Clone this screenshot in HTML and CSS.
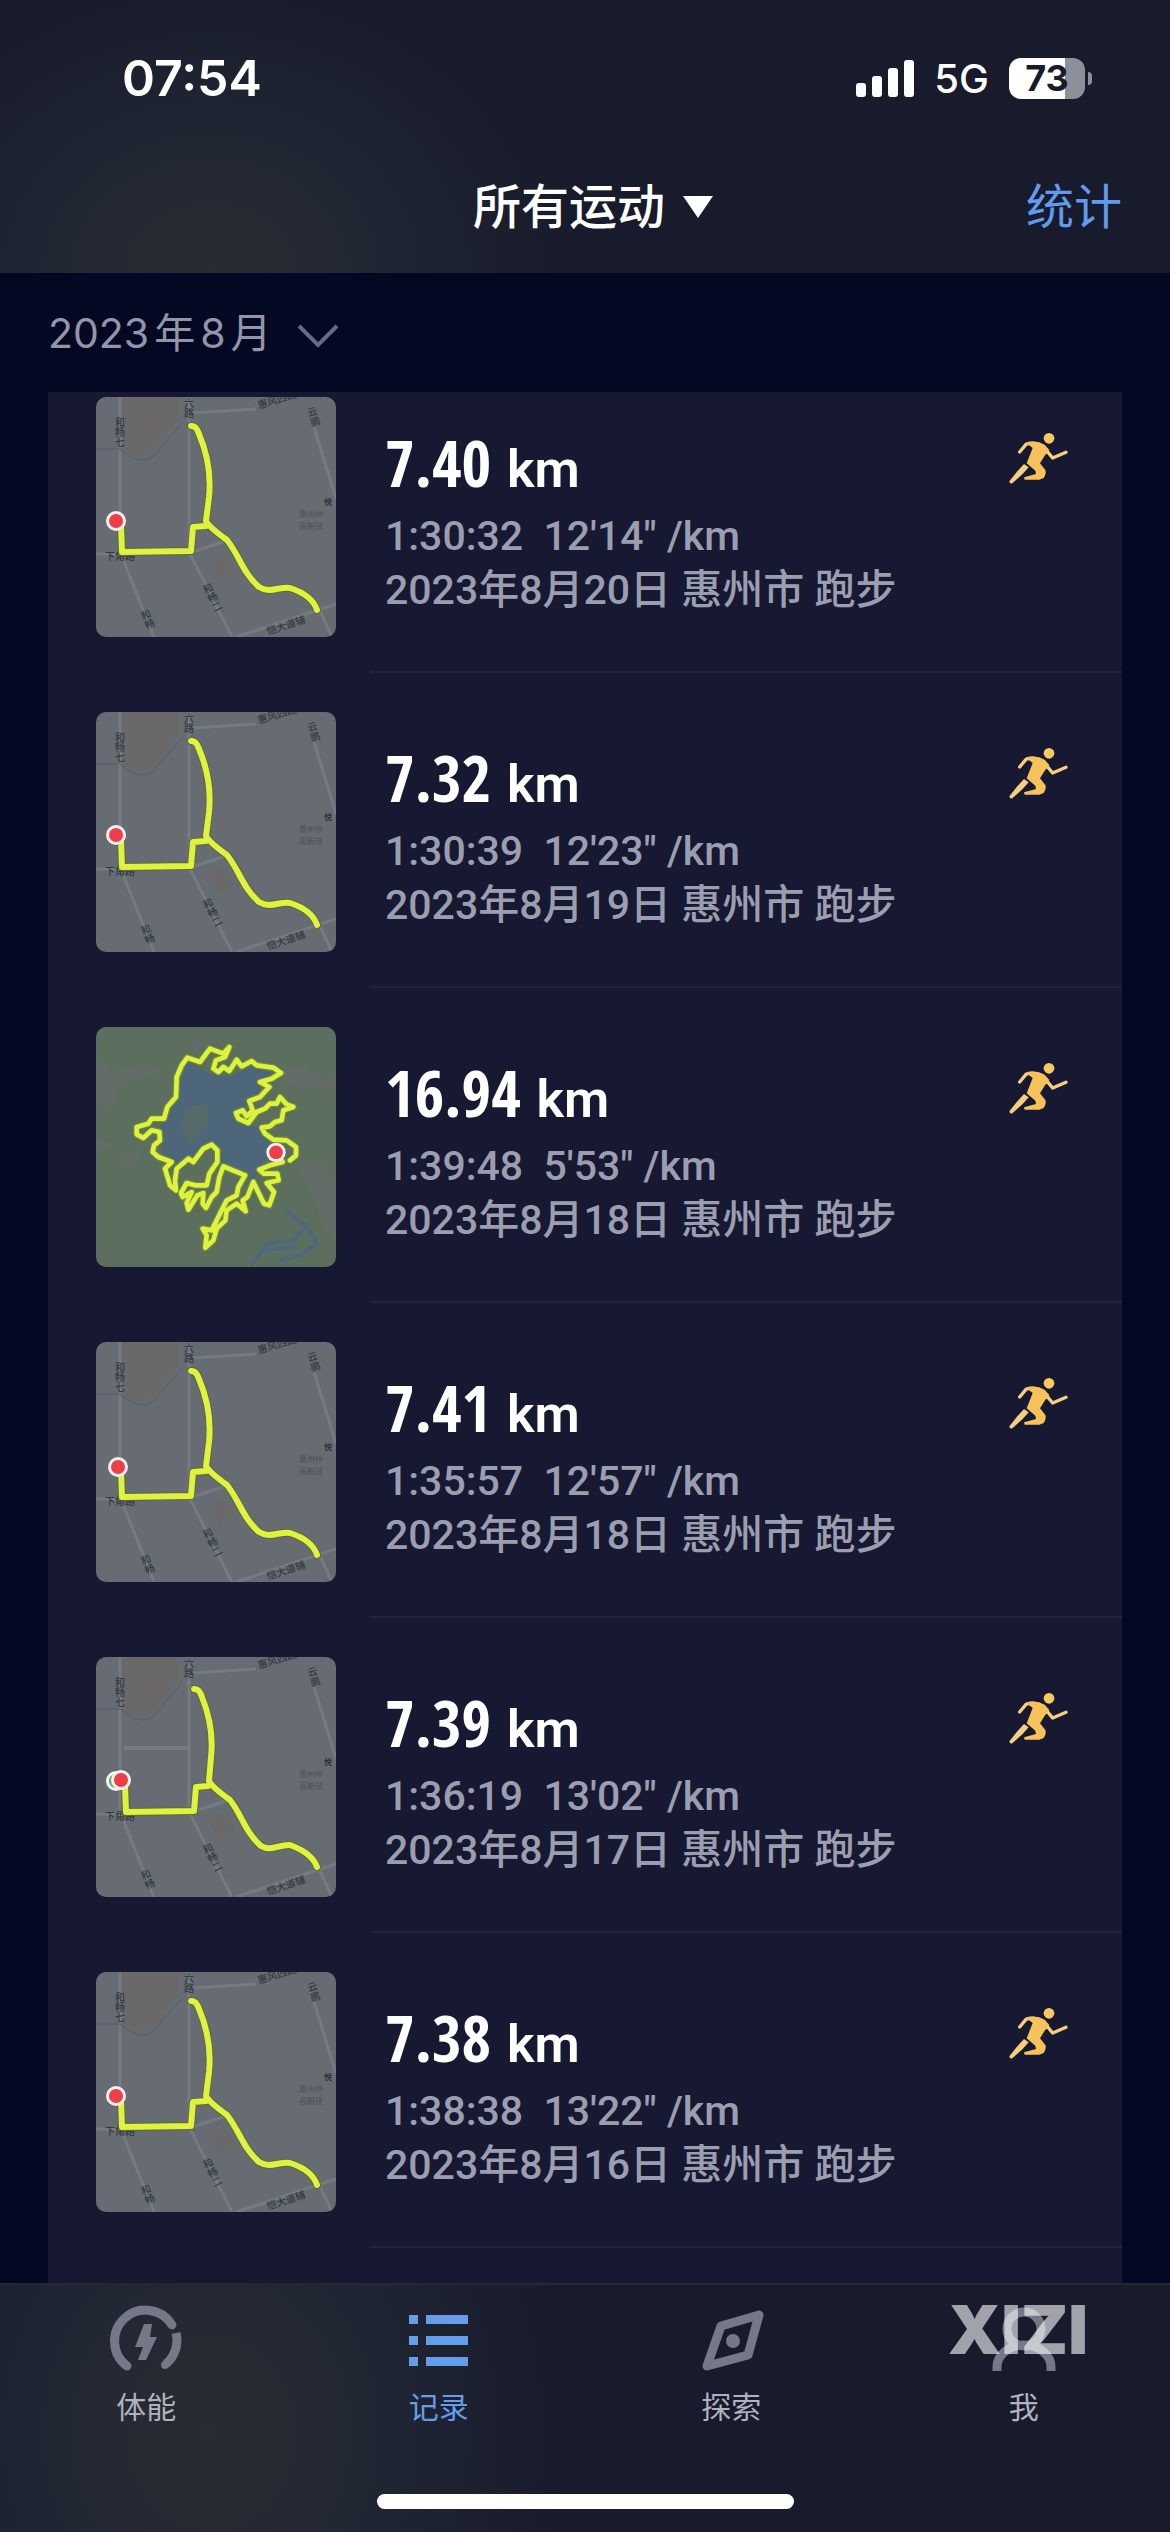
FILE: index.html
```html
<!DOCTYPE html>
<html lang="zh-CN">
<head>
<meta charset="utf-8">
<meta name="viewport" content="width=device-width, initial-scale=1">
<title>所有运动</title>
<link rel="stylesheet" href="styles.css">
</head>
<body>
<svg class="defs" aria-hidden="true">
  <symbol id="runner" viewBox="84 94 180 156">
    <circle cx="207" cy="113" r="16" fill="#f7c95e"/>
    <path fill="none" stroke="#f5cf7d" stroke-width="10" stroke-linecap="round" stroke-linejoin="round" d="M119 154 L138 131 Q152 125 172 130 M194 143 L218 172 L258 155"/>
    <path fill="#f7c25a" d="M138 126 Q168 116 194 132 L208 148 L202 158 L196 162 L180 188 L196 208 Q200 218 191 232 L178 237 L134 237 L132 230 L168 220 L166 210 L140 188 L158 142 Z"/>
    <path fill="#f5cf7d" d="M132 190 L146 200 L128 220 L97 248 Q89 251 88 242 L112 212 Z"/>
  </symbol>
  <symbol id="streets" viewBox="0 0 240 240">
    <rect width="240" height="240" fill="#666c71"/>
    <path fill="#6a6868" d="M26 0 H82 V22 L60 52 Q44 64 28 54 Z M112 165 L126 156 L140 172 L124 182 Z"/>
    <path fill="none" stroke="#747b82" stroke-width="3" d="M24 0 V155 L58 240 M93 0 V155 L136 240 M96 16 L160 12 M0 157 H24 M96 155 L130 144 M215 20 L240 102 M140 240 L240 207 M224 214 L236 240"/>
    <path fill="none" stroke="#545e68" stroke-width="1" d="M0 52 H24 Q48 72 60 56 L86 26"/>
    <g class="street-name">
      <text class="upright" x="24" y="20">和畅七</text>
      <text class="upright" x="93" y="1">六路</text>
      <text transform="translate(163 12) rotate(-17)">惠风四路</text>
      <text class="upright" transform="translate(215 10) rotate(-16)">云鹏</text>
      <text x="9" y="163">下角路</text>
      <text class="upright" transform="translate(110 187) rotate(-26)">和畅二</text>
      <text class="upright" transform="translate(48 213) rotate(-22)">和畅</text>
      <text transform="translate(172 238) rotate(-18)">恺大道辅</text>
      <text class="place" x="228" y="108">悦</text>
      <text class="faint" x="203" y="120">惠州仲</text>
      <text class="faint" x="203" y="132">高新技</text>
    </g>
  </symbol>
  <symbol id="route" viewBox="0 0 240 240">
    <g fill="none" stroke-linejoin="round" stroke-linecap="round">
      <path stroke="#5c6b3c" stroke-width="8" d="M95 29 Q100 28 103 37 C112 58 115 80 113 100 L110 124 Q113 130 131 143 C143 158 147 176 163 190 C174 197 184 189 194 191 Q216 198 221 213 M110 129 L97 130 L95 154 L26 155 L25 128"/>
      <path stroke="#def23f" stroke-width="6" d="M95 29 Q100 28 103 37 C112 58 115 80 113 100 L110 124 Q113 130 131 143 C143 158 147 176 163 190 C174 197 184 189 194 191 Q216 198 221 213 M110 129 L97 130 L95 154 L26 155 L25 128"/>
    </g>
  </symbol>
  <symbol id="pin" viewBox="0 0 22 22">
    <circle cx="11" cy="11" r="10" fill="#f6eef0"/>
    <circle cx="11" cy="11" r="7" fill="#ee3f48"/>
  </symbol>
</svg>

<div class="app">
  <header class="top">
    <div class="status">
      <time class="clock">07:54</time>
      <div class="status-right">
        <svg class="signal" viewBox="0 0 58 37" aria-hidden="true"><g fill="#fff"><rect y="23" width="10" height="14" rx="3"/><rect x="16" y="16" width="10" height="21" rx="3"/><rect x="32" y="8" width="10" height="29" rx="3"/><rect x="48" width="10" height="37" rx="3"/></g></svg>
        <span class="network">5G</span>
        <span class="battery">73</span>
      </div>
    </div>
    <div class="nav">
      <h1 class="nav-title"><button class="filter" type="button">所有运动<svg class="caret" viewBox="0 0 30 22" aria-hidden="true"><path fill="#fff" d="M0 0H30L15 22Z"/></svg></button></h1>
      <a class="stats" href="#stats">统计</a>
    </div>
  </header>

  <div class="month-bar">
    <button class="month" type="button"><span>2023</span><span>年</span><span>8</span><span>月</span>
      <svg class="chevron" viewBox="0 0 42 24" aria-hidden="true"><path fill="none" stroke="#676a80" stroke-width="4" d="M2 2L21 21L40 2"/></svg>
    </button>
  </div>

  <main class="card">
    <ul class="runs">
      <li class="run">
        <svg class="map" viewBox="0 0 240 240" aria-hidden="true"><use href="#streets"/><use href="#route"/><use href="#pin" x="9" y="113" width="22" height="22"/></svg>
        <div class="run-body"><div class="run-text">
          <h2 class="distance">7.40 <span class="unit">km</span></h2>
          <p class="meta">1:30:32&nbsp; 12'14" /km</p>
          <p class="meta">2023年8月20日 惠州市 跑步</p>
        </div><svg class="runner" aria-hidden="true"><use href="#runner"/></svg></div>
      </li>
      <li class="run">
        <svg class="map" viewBox="0 0 240 240" aria-hidden="true"><use href="#streets"/><use href="#route"/><use href="#pin" x="9" y="112" width="22" height="22"/></svg>
        <div class="run-body"><div class="run-text">
          <h2 class="distance">7.32 <span class="unit">km</span></h2>
          <p class="meta">1:30:39&nbsp; 12'23" /km</p>
          <p class="meta">2023年8月19日 惠州市 跑步</p>
        </div><svg class="runner" aria-hidden="true"><use href="#runner"/></svg></div>
      </li>
      <li class="run">
        <svg class="map" viewBox="48 50 720 720" aria-hidden="true">
          <rect x="48" y="50" width="720" height="720" fill="#5c6e5d"/>
          <path fill="#666b6c" opacity=".8" d="M48 150 L100 180 L200 160 L250 185 L120 220 L100 290 L48 280Z M600 180 L680 165 L730 210 L768 200 V235 L620 225Z M650 460 L720 450 L768 520 V690 L730 660 L700 560Z M110 430 L190 420 L160 475Z M330 90 L370 85 L350 140Z M48 390 L110 400 L48 430Z"/>
          <path fill="#4e667a" d="M318 150 L390 190 L450 200 L520 165 L590 195 L540 230 L540 270 L470 300 L500 345 L545 350 L570 385 L560 440 L520 510 L430 460 L400 400 L350 440 L290 460 L250 440 L240 350 L290 260Z"/>
          <path fill="#566a69" d="M320 290 L380 280 L385 340 L330 400 L300 350Z"/>
          <path fill="none" stroke="#4d687b" stroke-width="12" d="M515 765 L560 700 L640 690 L680 645 L710 700 L660 735 L600 750 M545 720 L650 710 M620 600 L690 660"/>
          <g fill="none" stroke-linejoin="round" stroke-linecap="round">
            <path stroke="#728b3c" stroke-width="21" d="M585 425 L608 455 L570 465 L538 478 L552 490 L592 490 L596 510 L560 518 L582 545 L568 585 L552 580 L520 515 L502 560 L488 570 L497 603 L470 580 L440 600 L436 630 L410 655 L400 690 L376 712 L380 675 L368 655 L395 660 L420 610 L440 570 L470 555 L475 530 L495 495 L430 468 L418 500 L410 545 L395 560 L378 593 L368 580 L370 548 L352 555 L325 598 L320 578 L335 545 L308 560 L303 548 L320 518 L345 525 L380 525 L388 490 L412 455 L412 420 L395 403 L370 415 L340 455 L325 445 L290 475 L285 510 L288 540 L270 525 L255 475 L275 455 L235 440 L218 425 L222 405 L240 390 L238 365 L215 360 L190 383 L170 372 L170 350 L205 340 L215 325 L252 325 L262 290 L288 260 L290 200 L305 165 L322 142 L360 155 L390 115 L430 130 L448 110 L435 140 L408 150 L400 175 L415 185 L430 170 L448 182 L470 148 L485 168 L515 152 L530 165 L580 172 L603 188 L575 205 L540 215 L568 230 L540 260 L508 272 L518 300 L500 318 L488 300 L468 308 L475 325 L505 338 L530 305 L555 295 L570 280 L590 280 L600 260 L620 282 L640 290 L610 300 L605 330 L585 335 L570 348 L545 352 L555 370 L580 388 L620 390 L648 410 L648 435 L630 450"/>
            <path stroke="#ddf33e" stroke-width="14" d="M585 425 L608 455 L570 465 L538 478 L552 490 L592 490 L596 510 L560 518 L582 545 L568 585 L552 580 L520 515 L502 560 L488 570 L497 603 L470 580 L440 600 L436 630 L410 655 L400 690 L376 712 L380 675 L368 655 L395 660 L420 610 L440 570 L470 555 L475 530 L495 495 L430 468 L418 500 L410 545 L395 560 L378 593 L368 580 L370 548 L352 555 L325 598 L320 578 L335 545 L308 560 L303 548 L320 518 L345 525 L380 525 L388 490 L412 455 L412 420 L395 403 L370 415 L340 455 L325 445 L290 475 L285 510 L288 540 L270 525 L255 475 L275 455 L235 440 L218 425 L222 405 L240 390 L238 365 L215 360 L190 383 L170 372 L170 350 L205 340 L215 325 L252 325 L262 290 L288 260 L290 200 L305 165 L322 142 L360 155 L390 115 L430 130 L448 110 L435 140 L408 150 L400 175 L415 185 L430 170 L448 182 L470 148 L485 168 L515 152 L530 165 L580 172 L603 188 L575 205 L540 215 L568 230 L540 260 L508 272 L518 300 L500 318 L488 300 L468 308 L475 325 L505 338 L530 305 L555 295 L570 280 L590 280 L600 260 L620 282 L640 290 L610 300 L605 330 L585 335 L570 348 L545 352 L555 370 L580 388 L620 390 L648 410 L648 435 L630 450"/>
          </g>
          <use href="#pin" x="556" y="394" width="64" height="64"/>
        </svg>
        <div class="run-body"><div class="run-text">
          <h2 class="distance">16.94 <span class="unit">km</span></h2>
          <p class="meta">1:39:48&nbsp; 5'53" /km</p>
          <p class="meta">2023年8月18日 惠州市 跑步</p>
        </div><svg class="runner" aria-hidden="true"><use href="#runner"/></svg></div>
      </li>
      <li class="run">
        <svg class="map" viewBox="0 0 240 240" aria-hidden="true"><use href="#streets"/><use href="#route"/><use href="#pin" x="11" y="114" width="22" height="22"/></svg>
        <div class="run-body"><div class="run-text">
          <h2 class="distance">7.41 <span class="unit">km</span></h2>
          <p class="meta">1:35:57&nbsp; 12'57" /km</p>
          <p class="meta">2023年8月18日 惠州市 跑步</p>
        </div><svg class="runner" aria-hidden="true"><use href="#runner"/></svg></div>
      </li>
      <li class="run">
        <svg class="map" viewBox="0 0 240 240" aria-hidden="true"><use href="#streets"/><path fill="none" stroke="#747b82" stroke-width="4" d="M28 91H95"/>
          <g fill="none" stroke-linejoin="round" stroke-linecap="round">
            <path stroke="#5c6b3c" stroke-width="8" d="M98 32 Q103 31 106 40 C114 60 117 82 115 100 L113 124 Q116 130 134 143 C146 158 149 175 165 189 C175 195 184 187 194 188 Q216 196 221 210 M112 129 L100 130 L98 154 L30 155 L29 128"/>
            <path stroke="#def23f" stroke-width="6" d="M98 32 Q103 31 106 40 C114 60 117 82 115 100 L113 124 Q116 130 134 143 C146 158 149 175 165 189 C175 195 184 187 194 188 Q216 196 221 210 M112 129 L100 130 L98 154 L30 155 L29 128"/>
          </g>
          <circle cx="20" cy="124" r="10" fill="#f3f3f3"/><circle cx="20" cy="124" r="7" fill="#46b75c"/><use href="#pin" x="14" y="112" width="22" height="22"/></svg>
        <div class="run-body"><div class="run-text">
          <h2 class="distance">7.39 <span class="unit">km</span></h2>
          <p class="meta">1:36:19&nbsp; 13'02" /km</p>
          <p class="meta">2023年8月17日 惠州市 跑步</p>
        </div><svg class="runner" aria-hidden="true"><use href="#runner"/></svg></div>
      </li>
      <li class="run">
        <svg class="map" viewBox="0 0 240 240" aria-hidden="true"><use href="#streets"/><use href="#route"/><use href="#pin" x="9" y="113" width="22" height="22"/></svg>
        <div class="run-body"><div class="run-text">
          <h2 class="distance">7.38 <span class="unit">km</span></h2>
          <p class="meta">1:38:38&nbsp; 13'22" /km</p>
          <p class="meta">2023年8月16日 惠州市 跑步</p>
        </div><svg class="runner" aria-hidden="true"><use href="#runner"/></svg></div>
      </li>
    </ul>
  </main>

  <footer class="bottom">
    <nav class="tabs">
      <a class="tab" href="#fitness">
        <svg class="tab-icon" viewBox="0 0 76 76" aria-hidden="true"><g fill="none" stroke="#747887" stroke-width="9"><path stroke-linecap="round" d="M19 63 A31 31 0 1 1 64 22"/><path d="M68 30 A31 31 0 0 1 58 61"/></g><circle cx="57" cy="62" r="4" fill="#747887"/><path fill="#747887" d="M36 21 H44 L42 34 H49 L38 57 H30 L35 44 H27 Z"/></svg>
        体能</a>
      <a class="tab tab-active" href="#records" aria-current="page">
        <svg class="tab-icon" viewBox="0 0 76 76" aria-hidden="true"><path fill="#669cec" d="M8 12h9v9H8zM25 12h42v9H25zM8 33h9v9H8zM25 33h42v9H25zM8 54h9v9H8zM25 54h42v9H25z"/></svg>
        记录</a>
      <a class="tab" href="#explore">
        <svg class="tab-icon" viewBox="0 0 76 76" aria-hidden="true"><path fill="none" stroke="#747887" stroke-width="9" stroke-linejoin="round" d="M66 12 L28 23 L14 63 L55 52 Z"/><circle cx="40" cy="38" r="7" fill="#747887"/></svg>
        探索</a>
      <a class="tab" href="#me">
        <svg class="tab-icon" viewBox="0 0 76 76" aria-hidden="true"><g fill="none" stroke="#747887" stroke-width="9"><circle cx="38" cy="26" r="17"/><path d="M11 68 V64 A27 22 0 0 1 65 64 V68"/></g></svg>
        我</a>
    </nav>
    <span class="watermark">XIZI</span>
    <div class="home-indicator"></div>
  </footer>
</div>
</body>
</html>
```
FILE: styles.css
```css
* { box-sizing: border-box; }

body {
  margin: 0;
  background: #050823;
  color: #fff;
  font-family: Inter, "Noto Sans CJK SC", sans-serif;
}

button {
  border: 0;
  padding: 0;
  background: none;
  color: inherit;
  font: inherit;
}

a { color: inherit; text-decoration: none; }

.defs { position: absolute; width: 0; height: 0; }

.app {
  display: flex;
  flex-direction: column;
  min-height: 100vh;
}

/* Header */
.top {
  padding-bottom: 15px;
  background:
    radial-gradient(ellipse 360px 300px at 18% 100%, #282d32 0%, #222734 40%, transparent 100%),
    #171b2b;
}

.status {
  display: flex;
  align-items: center;
  justify-content: space-between;
  height: 156px;
  padding: 0 79px 0 122px;
}

.clock { font-size: 50px; font-weight: 600; }

.status-right { display: flex; align-items: center; }

.signal { width: 58px; height: 37px; }

.network { margin: 0 20px; font-size: 40px; font-weight: 500; }

.battery {
  position: relative;
  width: 76px;
  height: 41px;
  margin-right: 6px;
  border-radius: 12px;
  background: linear-gradient(90deg, #fff 74%, #8d9098 74%);
  color: #171b2b;
  font-size: 36px;
  font-weight: 700;
  line-height: 41px;
  text-align: center;
}

.battery::after {
  content: "";
  position: absolute;
  top: 14px;
  right: -7px;
  width: 4px;
  height: 13px;
  border-radius: 0 4px 4px 0;
  background: #8d9098;
}

.nav {
  display: grid;
  grid-template-columns: 1fr auto 1fr;
  align-items: center;
  height: 102px;
  padding: 0 48px;
  font-size: 48px;
  line-height: 64px;
}

.nav-title {
  grid-column: 2;
  margin: 0;
  padding-left: 16px;
  font-size: 48px;
  font-weight: 500;
}

.filter { display: flex; align-items: center; gap: 18px; }

.caret { width: 30px; height: 22px; }

.stats { justify-self: end; color: #629bee; }

/* Month selector */
.month-bar {
  display: flex;
  align-items: center;
  height: 119px;
  padding: 0 48px;
}

.month {
  display: flex;
  align-items: center;
  gap: 5px;
  color: #9396a8;
  font-size: 41px;
  line-height: 56px;
}

.chevron { width: 42px; height: 24px; margin: 6px 0 0 20px; }

/* Activity list */
.card {
  flex: 1;
  margin: 0 48px;
  padding: 5px 0 35px 48px;
  background: #161931;
}

.runs {
  display: flex;
  flex-direction: column;
  gap: 39px;
  margin: 0;
  padding: 0;
  list-style: none;
}

.run { display: flex; gap: 34px; }

.map {
  flex: none;
  width: 240px;
  height: 240px;
  border-radius: 10px;
}

.street-name {
  fill: #343a41;
  font-family: "Noto Sans CJK SC", sans-serif;
  font-size: 10px;
  font-weight: 500;
}

.upright { writing-mode: vertical-rl; }
.faint { fill: #50565d; font-size: 8px; }
.place { fill: #22272e; font-size: 8px; }

.run-body {
  display: flex;
  flex: 1;
  align-items: flex-start;
  justify-content: space-between;
  height: 276px;
  padding: 0 54px 0 15px;
  border-bottom: 2px solid #202439;
}

.run-text { padding-top: 27px; }

.distance {
  margin: 0;
  font-family: "Open Sans Condensed", "Roboto Condensed", sans-serif;
  font-size: 64px;
  font-weight: 700;
  line-height: 78px;
}

.unit {
  font-family: Roboto, sans-serif;
  font-size: 52px;
  font-weight: 600;
}

.meta {
  margin: 0;
  color: #9b9eaf;
  font-family: Roboto, "Noto Sans CJK SC", sans-serif;
  font-size: 41px;
  font-weight: 500;
  line-height: 54px;
}

.runner { width: 60px; height: 52px; margin-top: 35px; }

/* Tab bar */
.bottom {
  position: relative;
  display: flex;
  flex-direction: column;
  align-items: center;
  justify-content: space-between;
  min-height: 250px;
  padding: 18px 0 24px;
  border-top: 2px solid #23283a;
  background:
    radial-gradient(ellipse 360px 420px at 18% 60%, #282d32 0%, #222734 40%, transparent 100%),
    #171b2b;
}

.tabs {
  display: grid;
  grid-template-columns: repeat(4, 1fr);
  width: 100%;
}

.tab {
  display: flex;
  flex-direction: column;
  align-items: center;
  gap: 10px;
  color: #b0b2bf;
  font-size: 30px;
  line-height: 36px;
}

.tab-active { color: #669cec; }

.tab-icon { width: 76px; height: 76px; }

.watermark {
  position: absolute;
  top: 4px;
  right: 82px;
  color: rgba(255, 255, 255, 0.6);
  font-size: 68px;
  font-weight: 900;
  line-height: 80px;
}

.home-indicator {
  width: 417px;
  height: 15px;
  border-radius: 8px;
  background: #fff;
}
```
